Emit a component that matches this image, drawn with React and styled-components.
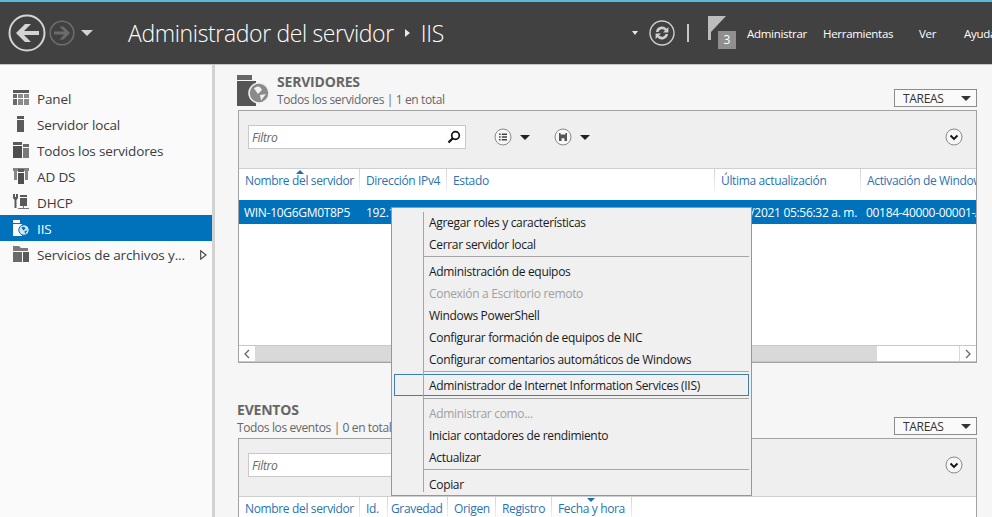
import React from "react";
import styled, { createGlobalStyle } from "styled-components";

const GlobalStyle = createGlobalStyle`
  html, body {
    margin: 0;
    padding: 0;
    background: #f6f6f6;
  }
  body {
    font-family: "Open Sans", "Noto Sans", "Liberation Sans", sans-serif;
    font-size: 12px;
  }
  * {
    box-sizing: border-box;
  }
`;

const Page = styled.div`
  width: 992px;
  height: 517px;
  overflow: hidden;
  display: flex;
  flex-direction: column;
`;

const Header = styled.header`
  flex: 0 0 65px;
  display: flex;
  background: #414141;
  border-top: 2px solid #5ab8de;
  border-bottom: 1px solid #c6c6c6;
  color: #fff;
  overflow: hidden;
`;

const HeaderLeft = styled.div`
  flex: 0 0 632px;
  display: flex;
  align-items: center;
  padding-left: 8px;
`;

const Title = styled.h1`
  margin: 0 0 0 35px;
  font-family: "Open Sans", sans-serif;
  font-size: 23px;
  font-weight: 300;
  letter-spacing: -0.36px;
  white-space: nowrap;
  color: #fff;
`;

const CrumbTitle = styled(Title)`
  margin: 0;
`;

const Crumb = styled.span`
  width: 0;
  height: 0;
  margin: 0 11px 0 11px;
  border-left: 5px solid #e8e8e8;
  border-top: 4px solid transparent;
  border-bottom: 4px solid transparent;
`;

const HeaderRight = styled.div`
  flex: 0 0 360px;
  display: flex;
  align-items: center;
`;

const HeaderLink = styled.span`
  flex: 0 0 ${(p) => p.$w}px;
  margin-left: ${(p) => p.$ml || 0}px;
  font-size: 11.5px;
  letter-spacing: -0.3px;
  white-space: nowrap;
  color: #fff;
`;

const VDivider = styled.span`
  width: 2px;
  height: 18px;
  margin: 0 19px 0 12px;
  background: #c8c8c8;
`;

const FlagWrap = styled.div`
  position: relative;
  width: 38px;
  height: 34px;
  margin-top: -1px;
`;

const Badge = styled.span`
  position: absolute;
  left: 10px;
  top: 15px;
  width: 18px;
  height: 18px;
  background: #8f8f8f;
  color: #fff;
  font-size: 12px;
  line-height: 18px;
  text-align: center;
`;

const Body = styled.div`
  flex: 1;
  display: flex;
  min-height: 0;
`;

const Sidebar = styled.nav`
  flex: 0 0 215px;
  padding-top: 20px;
  background: #fafafa;
  border-right: 3px solid #d2d2d2;
`;

const NavRow = styled.div`
  height: 26px;
  display: flex;
  align-items: center;
  padding: 2px 5px 0 12px;
  font-size: 13.5px;
  letter-spacing: -0.13px;
  white-space: nowrap;
  background: ${(p) => (p.$active ? "#0072bc" : "transparent")};
  color: ${(p) => (p.$active ? "#fff" : "#3c3c3c")};
`;

const NavLabel = styled.span`
  margin-left: 7px;
`;

const Main = styled.main`
  position: relative;
  flex: 1;
  min-width: 0;
  padding: 9px 15px 0 22px;
  background: #f6f6f6;
  color: #444;
`;

const Section = styled.section`
  margin-bottom: 39px;
`;

const SectionHead = styled.div`
  height: 36px;
  display: flex;
  align-items: flex-start;
  gap: 6px;
`;

const HeadText = styled.div`
  flex: 1;
`;

const SectionTitle = styled.div`
  font-size: 14px;
  font-weight: 700;
  line-height: 15px;
  letter-spacing: -0.2px;
  color: #666;
`;

const SectionSub = styled.div`
  margin-top: 2px;
  font-size: 12px;
  line-height: 17px;
  letter-spacing: -0.38px;
  color: #666;
`;

const TasksButton = styled.div`
  align-self: flex-end;
  width: 83px;
  height: 18px;
  margin-bottom: 3px;
  display: flex;
  align-items: center;
  justify-content: space-between;
  padding: 0 4px 0 8px;
  background: #fafafa;
  border: 1px solid #8c8c8c;
  font-size: 12px;
  letter-spacing: -0.3px;
  color: #333;
`;

const Caret = styled.span`
  width: 0;
  height: 0;
  margin: ${(p) => p.$m || "0"};
  border-top: ${(p) => p.$h || 5}px solid ${(p) => p.$c || "#333"};
  border-left: ${(p) => p.$s || 5}px solid transparent;
  border-right: ${(p) => p.$s || 5}px solid transparent;
`;

const Panel = styled.div`
  height: ${(p) => p.$h}px;
  margin-left: 1px;
  display: flex;
  flex-direction: column;
  background: #fff;
  border: 1px solid #a2a2a2;
`;

const Toolbar = styled.div`
  flex: 0 0 58px;
  display: flex;
  align-items: flex-start;
  padding: 14px 13px 0 9px;
  background: #efefef;
  border-bottom: 1px solid #cfcfcf;
`;

const FilterBox = styled.div`
  width: 218px;
  height: 24px;
  display: flex;
  align-items: center;
  justify-content: space-between;
  padding: 0 4px 0 3px;
  background: #fff;
  border: 1px solid #c8c8c8;
  font-size: 12px;
  font-style: italic;
  letter-spacing: -0.3px;
  color: #666;
`;

const ToolGroup = styled.div`
  height: 24px;
  display: flex;
  align-items: center;
  margin-left: ${(p) => p.$ml}px;
`;

const Pushed = styled.div`
  margin-left: auto;
  height: 24px;
  display: flex;
  align-items: center;
`;

const ColumnRow = styled.div`
  flex: 0 0 31px;
  display: flex;
  overflow: hidden;
`;

const Column = styled.div`
  position: relative;
  flex: ${(p) => (p.$w ? `0 0 ${p.$w}px` : "1")};
  min-width: 0;
  padding: 3px 0 0 ${(p) => p.$pl ?? 6}px;
  font-size: 12px;
  letter-spacing: -0.35px;
  white-space: nowrap;
  overflow: hidden;
  color: #2a73b2;
  &::after {
    content: "";
    position: absolute;
    right: 0;
    top: 0;
    width: 1px;
    height: 22px;
    background: ${(p) =>
      p.$w ? "linear-gradient(#d4d4d4, #f2f2f2)" : "transparent"};
  }
`;

const SortMark = styled.span`
  position: absolute;
  left: ${(p) => p.$x}px;
  top: 1px;
  width: 0;
  height: 0;
  border-bottom: 4px solid #1b6fb5;
  border-left: 4px solid transparent;
  border-right: 4px solid transparent;
  transform: ${(p) => (p.$down ? "rotate(180deg)" : "none")};
`;

const DataRow = styled.div`
  flex: 0 0 24px;
  display: flex;
  align-items: center;
  background: #0072bc;
  color: #fff;
  overflow: hidden;
`;

const Cell = styled.div`
  flex: 0 0 ${(p) => p.$w}px;
  padding-left: ${(p) => p.$pl ?? 5}px;
  padding-right: ${(p) => p.$pr ?? 0}px;
  font-size: 12px;
  letter-spacing: -0.3px;
  white-space: nowrap;
  text-align: ${(p) => p.$align || "left"};
`;

const TableBlank = styled.div`
  flex: 1;
`;

const ScrollBar = styled.div`
  flex: 0 0 17px;
  display: flex;
  background: #fff;
  border-top: 1px solid #c8c8c8;
  border-bottom: 1px solid #c8c8c8;
`;

const ScrollEnd = styled.div`
  flex: 0 0 17px;
  display: flex;
  align-items: center;
  justify-content: center;
  border-left: ${(p) => (p.$right ? "1px solid #d8d8d8" : "none")};
  border-right: ${(p) => (p.$right ? "none" : "1px solid #d8d8d8")};
  color: #777;
`;

const ScrollThumb = styled.div`
  flex: 0 0 621px;
  background: #d9d9d9;
`;

const ScrollRest = styled.div`
  flex: 1;
`;

const ContextMenu = styled.div`
  position: absolute;
  left: 176px;
  top: 142px;
  width: 361px;
  height: 289px;
  padding: 3px 2px 0 2px;
  background: #f0f0f0;
  border: 1px solid #979797;
  z-index: 5;
  &::before {
    content: "";
    position: absolute;
    left: 31px;
    top: 4px;
    bottom: 3px;
    width: 1px;
    background: #a6a6a6;
  }
`;

const MenuItem = styled.div`
  height: 22px;
  margin: ${(p) => (p.$hover ? "-1px 0 1px 0" : "0")};
  padding: 1px 0 0 34px;
  line-height: 19px;
  font-size: 12px;
  letter-spacing: -0.32px;
  white-space: nowrap;
  color: ${(p) => (p.$off ? "#a0a0a0" : "#1a1a1a")};
  border: ${(p) => (p.$hover ? "1px solid #3f7fb0" : "1px solid transparent")};
`;

const MenuSep = styled.div`
  height: 5px;
  margin-left: 30px;
  padding-top: 1px;
  &::after {
    content: "";
    display: block;
    height: 1px;
    background: #a6a6a6;
  }
`;

const ArrowBack = () => (
  <svg width="38" height="38" viewBox="0 0 38 38">
    <circle cx="19" cy="19" r="17.5" fill="none" stroke="#d4d4d4" strokeWidth="2" />
    <path d="M8 19 L17 10 H23 L16 17 H31 V21 H16 L23 28 H17 Z" fill="#d4d4d4" />
  </svg>
);

const ArrowForward = () => (
  <svg width="26" height="26" viewBox="0 0 26 26" style={{ marginLeft: 3 }}>
    <circle cx="13" cy="13" r="11.8" fill="none" stroke="#6c6c6c" strokeWidth="1.6" />
    <path d="M21 13 L14.5 6.5 H10.5 L15.5 11.5 H5 V14.5 H15.5 L10.5 19.5 H14.5 Z" fill="#6c6c6c" />
  </svg>
);

const RefreshIcon = () => (
  <svg width="26" height="26" viewBox="0 0 26 26" style={{ marginLeft: 11 }}>
    <circle cx="13" cy="13" r="12" fill="none" stroke="#cfcfcf" strokeWidth="1.4" />
    <path d="M7 12 A6 6 0 0 1 17.6 8.8 L19.4 7 V12.4 H14 L16 10.4 A4 4 0 0 0 9.4 12 Z" fill="#cfcfcf" />
    <path d="M19 14 A6 6 0 0 1 8.4 17.2 L6.6 19 V13.6 H12 L10 15.6 A4 4 0 0 0 16.6 14 Z" fill="#cfcfcf" />
  </svg>
);

const FlagIcon = () => (
  <svg width="20" height="26" viewBox="0 0 20 26" style={{ position: "absolute", left: 0, top: 0 }}>
    <rect x="0" y="0" width="3" height="24" fill="#bdbdbd" />
    <path d="M3 0 H18 L3 16 Z" fill="#bdbdbd" />
  </svg>
);

const SearchIcon = () => (
  <svg width="14" height="14" viewBox="0 0 14 14">
    <circle cx="8.5" cy="5.5" r="3.8" fill="none" stroke="#111" strokeWidth="1.7" />
    <path d="M5.8 8.2 L1.5 12.5" stroke="#111" strokeWidth="2.2" />
  </svg>
);

const RoundIcon = ({ children }) => (
  <svg width="18" height="18" viewBox="0 0 18 18">
    <circle cx="9" cy="9" r="8" fill="#f7f7f7" stroke="#8a8a8a" strokeWidth="1" />
    {children}
  </svg>
);

const ListGlyph = () => (
  <RoundIcon>
    <path d="M5 5.5 H6.6 V7 H5 Z M5 8.2 H6.6 V9.8 H5 Z M5 11 H6.6 V12.5 H5 Z" fill="#444" />
    <path d="M7.8 5.5 H13 V7 H7.8 Z M7.8 8.2 H13 V9.8 H7.8 Z M7.8 11 H13 V12.5 H7.8 Z" fill="#444" />
  </RoundIcon>
);

const SaveGlyph = () => (
  <RoundIcon>
    <path d="M5 5 H13 V13 H5 Z" fill="#555" />
    <path d="M6.6 5 H11.4 V6.6 H6.6 Z M7.6 10.2 H10.4 V13 H7.6 Z" fill="#f7f7f7" />
  </RoundIcon>
);

const ExpandGlyph = () => (
  <RoundIcon>
    <path d="M5.5 7.5 L9 11 L12.5 7.5" fill="none" stroke="#111" strokeWidth="1.8" />
  </RoundIcon>
);

const ChevronGlyph = ({ right }) => (
  <svg width="8" height="10" viewBox="0 0 8 10">
    <path
      d={right ? "M2 1 L6 5 L2 9" : "M6 1 L2 5 L6 9"}
      fill="none"
      stroke="#666"
      strokeWidth="1.3"
    />
  </svg>
);

const MoreArrow = () => (
  <svg width="7" height="10" viewBox="0 0 7 10" style={{ marginLeft: "auto" }}>
    <path d="M0.7 0.8 L6 5 L0.7 9.2 Z" fill="none" stroke="#444" strokeWidth="1.1" />
  </svg>
);

const GlobeMark = ({ x, y, r, fill, line }) => (
  <g>
    <circle cx={x} cy={y} r={r} fill={fill} stroke={line} strokeWidth={r > 8 ? 1.5 : 1} />
    <path
      d={`M${x - r * 0.5} ${y - r * 0.45} Q${x} ${y - r * 0.9} ${x + r * 0.3} ${y - r * 0.3} L${x - r * 0.1} ${y + r * 0.1} Z M${x + r * 0.1} ${y + r * 0.2} L${x + r * 0.7} ${y + r * 0.1} L${x + r * 0.2} ${y + r * 0.75} Z`}
      fill={line}
    />
  </g>
);

const ServerGlyph = () => (
  <svg width="34" height="32" viewBox="0 0 34 32" style={{ flex: "0 0 34px", marginTop: 1 }}>
    <rect x="0" y="0" width="15" height="5" fill="#666" />
    <rect x="0" y="6" width="19" height="25" fill="#555" />
    <GlobeMark x={22} y={18} r={10} fill="#8a8a8a" line="#f0f0f0" />
  </svg>
);

const navShapes = {
  panel: (
    <>
      <rect x="0" y="0" width="16" height="3" fill="#5a5a5a" />
      <path d="M0 4 H4 V8 H0 Z M0 9 H4 V15 H0 Z" fill="#6a6a6a" />
      <path d="M5 4 H10 V8 H5 Z M11 4 H16 V8 H11 Z M5 9 H10 V15 H5 Z M11 9 H16 V15 H11 Z" fill="#8b8b8b" />
    </>
  ),
  server: (
    <>
      <rect x="4" y="0" width="7" height="3" fill="#5a5a5a" />
      <rect x="4" y="4" width="7" height="12" fill="#5a5a5a" />
    </>
  ),
  all: (
    <>
      <rect x="0" y="0" width="9" height="3" fill="#5a5a5a" />
      <rect x="0" y="4" width="9" height="12" fill="#4f4f4f" />
      <rect x="10" y="2" width="6" height="3" fill="#6a6a6a" />
      <rect x="10" y="6" width="6" height="10" fill="#7a7a7a" />
    </>
  ),
  adds: (
    <>
      <path d="M0 0 H16 V3 H15 V12 H12 V3 H4 V12 H1 V3 H0 Z" fill="#858585" />
      <rect x="5" y="1" width="6" height="3" fill="#5a5a5a" />
      <rect x="5" y="5" width="6" height="11" fill="#4f4f4f" />
    </>
  ),
  dhcp: (
    <>
      <path d="M0 0 H2 V3 H3 V0 H5 V4 L3.5 6 V14 H1.5 V6 L0 4 Z" fill="#5a5a5a" />
      <rect x="7" y="1" width="7" height="2" fill="#5a5a5a" />
      <rect x="7" y="4" width="7" height="8" fill="#5a5a5a" />
      <path d="M10 12 H11 V14 H16 V15 H5 V14 H10 Z" fill="#777" />
    </>
  ),
  iis: (
    <>
      <rect x="0" y="0" width="7" height="3" fill="#fff" />
      <rect x="0" y="4" width="9" height="12" fill="#fff" />
      <GlobeMark x={11} y={10} r={5.2} fill="#cfe6f5" line="#0072bc" />
    </>
  ),
  files: (
    <>
      <path d="M0 0 H6 L8 2 H15 V5 H0 Z" fill="#7a7a7a" />
      <rect x="0" y="6" width="9" height="10" fill="#6a6a6a" />
      <rect x="10" y="6" width="6" height="10" fill="#5a5a5a" />
    </>
  ),
};

const NavIcon = ({ kind }) => (
  <svg width="18" height="16" viewBox="0 0 18 16" style={{ flex: "0 0 18px", marginTop: -2 }}>
    <g transform="translate(1 0)">{navShapes[kind]}</g>
  </svg>
);

const navItems = [
  { kind: "panel", label: "Panel" },
  { kind: "server", label: "Servidor local" },
  { kind: "all", label: "Todos los servidores" },
  { kind: "adds", label: "AD DS" },
  { kind: "dhcp", label: "DHCP" },
  { kind: "iis", label: "IIS", active: true },
  { kind: "files", label: "Servicios de archivos y...", more: true },
];

const serverColumns = [
  { label: "Nombre del servidor", w: 121, sort: 57 },
  { label: "Dirección IPv4", w: 87 },
  { label: "Estado", w: 268 },
  { label: "Última actualización", w: 146 },
  { label: "Activación de Windows" },
];

const eventColumns = [
  { label: "Nombre del servidor", w: 121 },
  { label: "Id.", w: 28 },
  { label: "Gravedad", w: 60, pl: 3 },
  { label: "Origen", w: 48 },
  { label: "Registro", w: 56 },
  { label: "Fecha y hora", w: 80, sort: 35, down: true },
  { label: "" },
];

const menuEntries = [
  { label: "Agregar roles y características" },
  { label: "Cerrar servidor local" },
  { sep: true },
  { label: "Administración de equipos" },
  { label: "Conexión a Escritorio remoto", off: true },
  { label: "Windows PowerShell" },
  { label: "Configurar formación de equipos de NIC" },
  { label: "Configurar comentarios automáticos de Windows" },
  { sep: true },
  { label: "Administrador de Internet Information Services (IIS)", hover: true },
  { sep: true },
  { label: "Administrar como...", off: true },
  { label: "Iniciar contadores de rendimiento" },
  { label: "Actualizar" },
  { sep: true },
  { label: "Copiar" },
];

const Columns = ({ items }) => (
  <ColumnRow>
    {items.map((c, i) => (
      <Column key={i} $w={c.w} $pl={c.pl}>
        {c.sort && <SortMark $x={c.sort} $down={c.down} />}
        {c.label}
      </Column>
    ))}
  </ColumnRow>
);

const FilterToolbar = ({ withViews }) => (
  <Toolbar>
    <FilterBox>
      Filtro
      <SearchIcon />
    </FilterBox>
    {withViews && (
      <>
        <ToolGroup $ml={28}>
          <ListGlyph />
          <Caret $m="0 0 0 8px" $c="#222" />
        </ToolGroup>
        <ToolGroup $ml={24}>
          <SaveGlyph />
          <Caret $m="0 0 0 8px" $c="#222" />
        </ToolGroup>
      </>
    )}
    <Pushed>
      <ExpandGlyph />
    </Pushed>
  </Toolbar>
);

export default function App() {
  return (
    <Page>
      <GlobalStyle />
      <Header>
        <HeaderLeft>
          <ArrowBack />
          <ArrowForward />
          <Caret $m="0 0 0 6px" $c="#d4d4d4" $h={6} $s={6} />
          <Title>Administrador del servidor</Title>
          <Crumb />
          <CrumbTitle as="span">IIS</CrumbTitle>
        </HeaderLeft>
        <HeaderRight>
          <Caret $c="#e8e8e8" $h={4} $s={3} />
          <RefreshIcon />
          <VDivider />
          <FlagWrap>
            <FlagIcon />
            <Badge>3</Badge>
          </FlagWrap>
          <HeaderLink $w={76} $ml={1}>Administrar</HeaderLink>
          <HeaderLink $w={96}>Herramientas</HeaderLink>
          <HeaderLink $w={45}>Ver</HeaderLink>
          <HeaderLink $w={40}>Ayuda</HeaderLink>
        </HeaderRight>
      </Header>
      <Body>
        <Sidebar>
          {navItems.map((item) => (
            <NavRow key={item.label} $active={item.active}>
              <NavIcon kind={item.kind} />
              <NavLabel>{item.label}</NavLabel>
              {item.more && <MoreArrow />}
            </NavRow>
          ))}
        </Sidebar>
        <Main>
          <Section>
            <SectionHead>
              <ServerGlyph />
              <HeadText>
                <SectionTitle>SERVIDORES</SectionTitle>
                <SectionSub>Todos los servidores | 1 en total</SectionSub>
              </HeadText>
              <TasksButton>
                TAREAS
                <Caret $m="0 1px 0 0" />
              </TasksButton>
            </SectionHead>
            <Panel $h={253}>
              <FilterToolbar withViews />
              <Columns items={serverColumns} />
              <DataRow>
                <Cell $w={121}>WIN-10G6GM0T8P5</Cell>
                <Cell $w={354} $pl={6}>192.1</Cell>
                <Cell $w={146} $align="right" $pr={3}>/2021 05:56:32 a. m.</Cell>
                <Cell $w={130} $pl={6}>00184-40000-00001-AA</Cell>
              </DataRow>
              <TableBlank />
              <ScrollBar>
                <ScrollEnd>
                  <ChevronGlyph />
                </ScrollEnd>
                <ScrollThumb />
                <ScrollRest />
                <ScrollEnd $right>
                  <ChevronGlyph right />
                </ScrollEnd>
              </ScrollBar>
            </Panel>
          </Section>
          <Section>
            <SectionHead>
              <HeadText>
                <SectionTitle>EVENTOS</SectionTitle>
                <SectionSub>Todos los eventos | 0 en total</SectionSub>
              </HeadText>
              <TasksButton>
                TAREAS
                <Caret $m="0 1px 0 0" />
              </TasksButton>
            </SectionHead>
            <Panel $h={120}>
              <FilterToolbar />
              <Columns items={eventColumns} />
            </Panel>
          </Section>
          <ContextMenu>
            {menuEntries.map((entry, i) =>
              entry.sep ? (
                <MenuSep key={i} />
              ) : (
                <MenuItem key={i} $off={entry.off} $hover={entry.hover}>
                  {entry.label}
                </MenuItem>
              )
            )}
          </ContextMenu>
        </Main>
      </Body>
    </Page>
  );
}
